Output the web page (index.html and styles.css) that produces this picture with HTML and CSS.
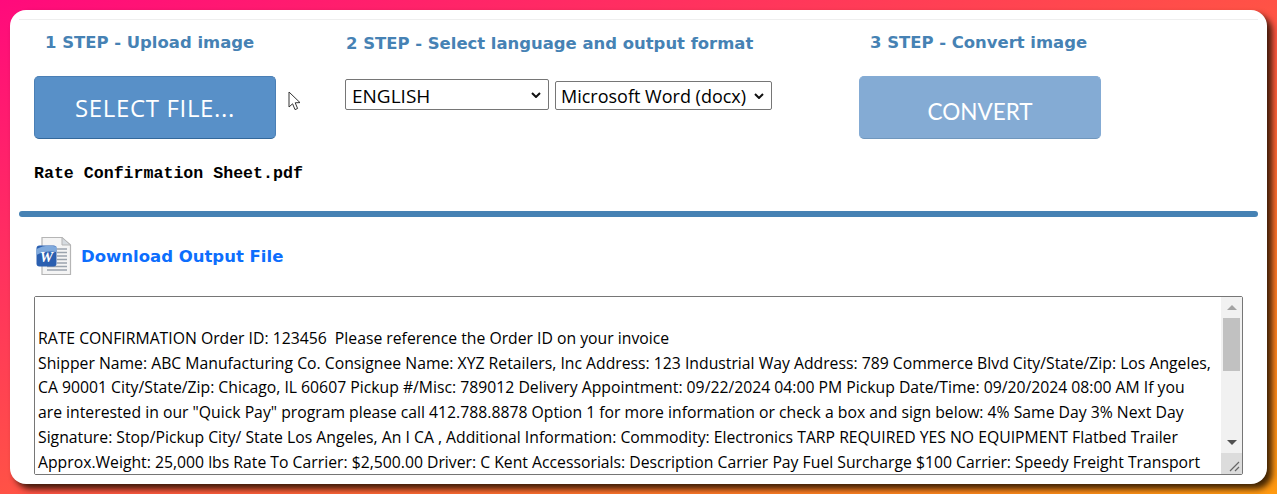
FILE: index.html
```html
<!DOCTYPE html>
<html>
<head>
  <title>Image to Text Converter</title>
  <link rel="stylesheet" href="styles.css">
</head>
<body>
  <div class="card">
    <div class="top-line"></div>
    <div class="steps">
      <div class="step step-upload">
        <h3 class="step-title">1 STEP - Upload image</h3>
        <div class="upload-row">
          <label class="btn btn-select">SELECT FILE...</label>
          <svg class="cursor" width="14" height="21" viewBox="0 0 14 21">
            <path d="M1 1 L1 16 L4.600 12.800 L7 18.600 L9.600 17.500 L7.200 11.800 L12 11.600 Z" fill="#fff" stroke="#333" stroke-width="1"/>
          </svg>
        </div>
        <p class="file-name">Rate Confirmation Sheet.pdf</p>
      </div>
      <div class="step step-options">
        <h3 class="step-title">2 STEP - Select language and output format</h3>
        <div class="select-row">
          <select class="select select-lang">
            <option>ENGLISH</option>
          </select>
          <select class="select select-format">
            <option>Microsoft Word (docx)</option>
          </select>
        </div>
      </div>
      <div class="step step-convert">
        <h3 class="step-title">3 STEP - Convert image</h3>
        <button class="btn btn-convert">CONVERT</button>
      </div>
    </div>
    <div class="divider"></div>
    <div class="download-row">
      <svg class="word-icon" width="38" height="42" viewBox="0 0 38 42">
        <path d="M7 2.500 H27 L35.500 10 V39.500 H7 Z" fill="#f4f4f4" stroke="#b5b5b5" stroke-width="1.200"/>
        <path d="M27 2.500 V10 H35.500 Z" fill="#d6dbe0" stroke="#b5b5b5" stroke-width="1"/>
        <path d="M22 14 H32 M22 17.500 H32 M22 21 H32 M22 24.500 H32 M22 28 H32 M12 31.500 H32 M12 35 H32" stroke="#9aa3ad" stroke-width="1.300"/>
        <rect x="1.500" y="10.500" width="20" height="21" rx="3" fill="#2a5fb0"/>
        <path d="M1.500 14 Q10 9 21.500 11.500 V17 Q10 15 1.500 20 Z" fill="#7fa9dc"/>
        <text class="word-letter" x="11.500" y="27" text-anchor="middle">W</text>
      </svg>
      <a class="download-link" href="#">Download Output File</a>
    </div>
    <div class="output-box">
      <textarea class="output" spellcheck="false">

RATE CONFIRMATION Order ID: 123456  Please reference the Order ID on your invoice
Shipper Name: ABC Manufacturing Co. Consignee Name: XYZ Retailers, Inc Address: 123 Industrial Way Address: 789 Commerce Blvd City/State/Zip: Los Angeles,
CA 90001 City/State/Zip: Chicago, IL 60607 Pickup #/Misc: 789012 Delivery Appointment: 09/22/2024 04:00 PM Pickup Date/Time: 09/20/2024 08:00 AM If you
are interested in our "Quick Pay" program please call 412.788.8878 Option 1 for more information or check a box and sign below: 4% Same Day 3% Next Day
Signature: Stop/Pickup City/ State Los Angeles, An I CA , Additional Information: Commodity: Electronics TARP REQUIRED YES NO EQUIPMENT Flatbed Trailer
Approx.Weight: 25,000 lbs Rate To Carrier: $2,500.00 Driver: C Kent Accessorials: Description Carrier Pay Fuel Surcharge $100 Carrier: Speedy Freight Transport
</textarea>
      <div class="scrollbar">
        <div class="scroll-btn"><span class="arrow-up"></span></div>
        <div class="scroll-track"><div class="scroll-thumb"></div></div>
        <div class="scroll-btn"><span class="arrow-down"></span></div>
        <div class="scroll-corner">
          <svg width="21" height="21" viewBox="0 0 21 21">
            <path d="M9 18 L18 9 M14 18 L18 14" stroke="#666" stroke-width="1.200"/>
          </svg>
        </div>
      </div>
    </div>
  </div>
</body>
</html>
```
FILE: styles.css
```css
html, body {
  height: 100%;
}

body {
  margin: 0;
  padding: 10px;
  box-sizing: border-box;
  overflow: hidden;
  background: linear-gradient(to bottom right, #ff0a7c, #ff9a10);
  font-family: "DejaVu Sans", Verdana, sans-serif;
}

.card {
  height: 474px;
  padding: 9px 9px 0;
  box-sizing: border-box;
  background-color: #fff;
  border-radius: 16px;
  box-shadow: 5px 5px 6px rgba(30, 15, 0, 0.85);
}

.top-line {
  height: 1px;
  background-color: #eee;
}

.steps {
  display: grid;
  grid-template-columns: 311px 514px 1fr;
  height: 191px;
  padding-left: 15px;
}

.step-title {
  margin: 0;
  color: #4682b4;
  font-size: 16.45px;
  font-weight: bold;
  line-height: 20px;
  padding-top: 13px;
}

.step-upload .step-title {
  padding-left: 11px;
}

.step-options .step-title {
  padding-left: 1px;
  padding-top: 14px;
}

.step-convert .step-title {
  padding-left: 11px;
}

.upload-row {
  display: flex;
  align-items: flex-start;
  margin-top: 23px;
}

.btn {
  display: block;
  width: 242px;
  height: 63px;
  box-sizing: border-box;
  border: 1px solid #4a7fb5;
  border-radius: 5px;
  color: #fff;
  text-align: center;
}

.btn-select {
  background-color: #5890c8;
  border-bottom-color: #33689b;
  font-family: "Open Sans", sans-serif;
  font-size: 24px;
  letter-spacing: 0.65px;
  line-height: 62px;
}

.btn-convert {
  margin-top: 23px;
  padding: 8px 0 0;
  background-color: #84abd4;
  border-color: #84abd4;
  border-bottom-color: #7097bd;
  font-family: Lato, sans-serif;
  font-size: 22.5px;
}

.cursor {
  margin: 15px 0 0 12px;
}

.file-name {
  margin: 25px 0 0;
  color: #000;
  font-family: "Liberation Mono", monospace;
  font-size: 16.6px;
  font-weight: bold;
  line-height: 20px;
}

.select-row {
  display: flex;
  align-items: flex-end;
  gap: 6px;
  margin-top: 25px;
}

.select {
  appearance: none;
  box-sizing: border-box;
  background-color: #fff;
  background-image: url("data:image/svg+xml,%3Csvg xmlns='http://www.w3.org/2000/svg' width='10' height='6'%3E%3Cpath d='M1 1 L5 5 L9 1' fill='none' stroke='%23111' stroke-width='2'/%3E%3C/svg%3E");
  background-repeat: no-repeat;
  background-position: right 7px center;
  border: 1px solid #767676;
  border-radius: 2px;
  color: #000;
  font-family: "Open Sans", sans-serif;
}

.select-lang {
  width: 204px;
  height: 31px;
  padding: 2px 0 0 6px;
  font-size: 19px;
}

.select-format {
  width: 217px;
  height: 29px;
  padding: 0 0 0 5px;
  font-size: 18px;
}

.divider {
  height: 6px;
  background-color: #4682b4;
  border-radius: 3px;
}

.download-row {
  display: flex;
  align-items: center;
  gap: 8px;
  height: 44px;
  margin-top: 17px;
  padding-left: 16px;
}

.word-letter {
  fill: #fff;
  font-family: "Liberation Serif", serif;
  font-size: 15px;
  font-weight: bold;
  font-style: italic;
}

.download-link {
  color: #0d6efd;
  font-size: 16.5px;
  font-weight: bold;
  text-decoration: none;
}

.output-box {
  display: flex;
  width: 1209px;
  height: 179px;
  box-sizing: border-box;
  margin: 18px 0 0 15px;
  border: 1px solid #767676;
  border-radius: 2px;
}

.output {
  flex: 1;
  padding: 4px 2px 0 3px;
  border: none;
  outline: none;
  color: #000;
  font-family: "Open Sans", sans-serif;
  font-size: 15.75px;
  line-height: 24.8px;
  overflow: hidden;
  resize: none;
}

.scrollbar {
  display: flex;
  flex-direction: column;
  width: 21px;
  background-color: #f1f1f1;
}

.scroll-btn {
  display: flex;
  align-items: center;
  justify-content: center;
  height: 21px;
}

.arrow-up {
  border: solid transparent;
  border-width: 0 5px 5px;
  border-bottom-color: #a3a3a3;
}

.arrow-down {
  border: solid transparent;
  border-width: 5px 5px 0;
  border-top-color: #505050;
}

.scroll-track {
  flex: 1;
  padding: 0 2px;
}

.scroll-thumb {
  height: 53px;
  background-color: #c1c1c1;
}

.scroll-corner {
  height: 21px;
  background-color: #dcdcdc;
}

.scroll-corner svg {
  display: block;
}
```
